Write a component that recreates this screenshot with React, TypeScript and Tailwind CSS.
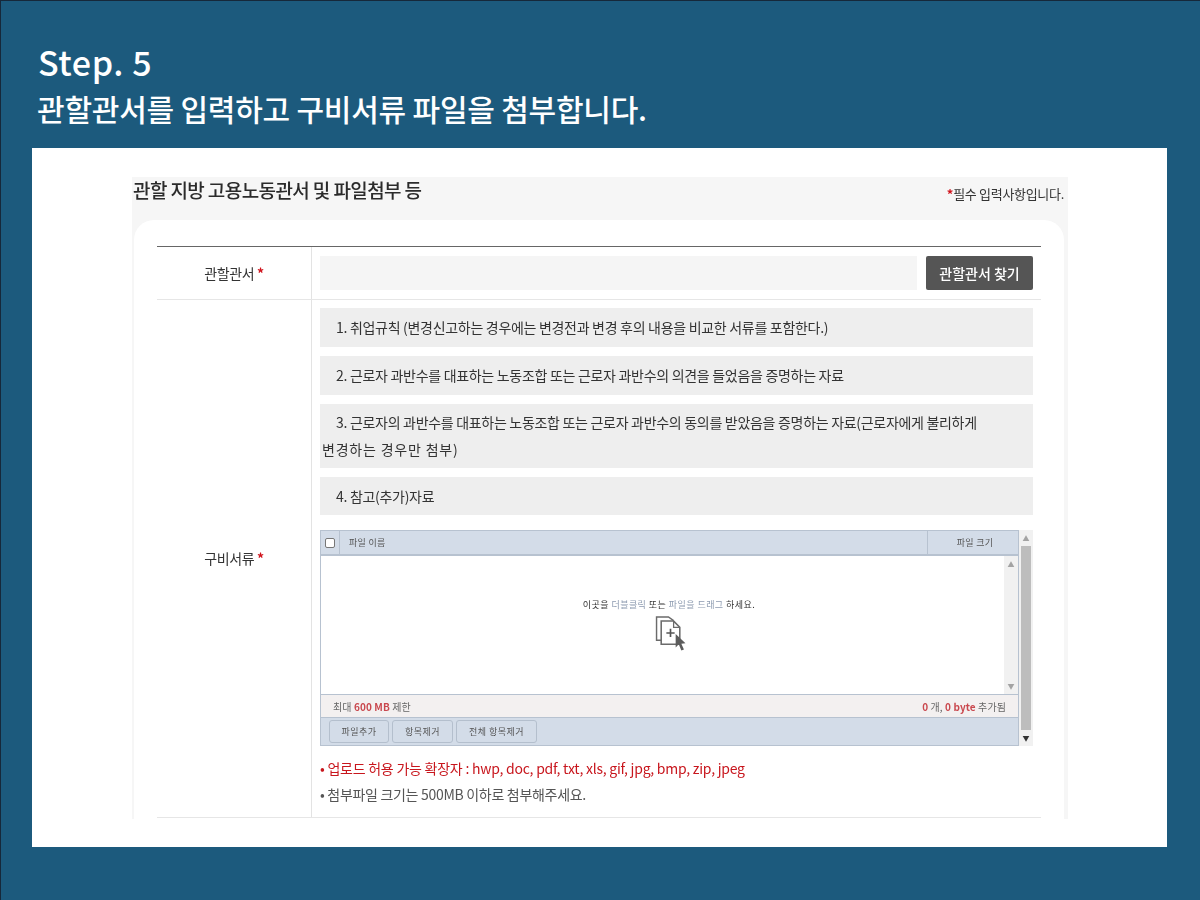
const font = { fontFamily: '"Noto Sans CJK KR", "Noto Sans", sans-serif' }

const docs = [
  '1. 취업규칙 (변경신고하는 경우에는 변경전과 변경 후의 내용을 비교한 서류를 포함한다.)',
  '2. 근로자 과반수를 대표하는 노동조합 또는 근로자 과반수의 의견을 들었음을 증명하는 자료',
]

const FileIcon = () => (
  <svg width="31" height="38" viewBox="0 0 30 36" fill="none" className="mt-[4px] ml-[2px]">
    <path d="M6 24H1.5V1.5H13L18 5" stroke="#6b6b6b" strokeWidth="1.4" />
    <path d="M6 5.5H18L24 11.5V28H6Z" fill="#fff" stroke="#6b6b6b" strokeWidth="1.5" />
    <path d="M18 5.5V11.5H24" stroke="#6b6b6b" strokeWidth="1.2" />
    <path d="M15 13V21M11 17H19" stroke="#555" strokeWidth="1.6" />
    <path d="M20 18L20 31L23 28L25.5 34L28 33L25.5 27.5L29.5 27Z" fill="#5c5c5c" />
  </svg>
)

const Label = ({ children }: { children: string }) => (
  <div className="flex items-center justify-center border-r border-[#e3e3e3] text-[14px] tracking-[-0.4px] text-[#333]">
    {children}
    <span className="ml-[3px] font-bold text-[#d0121b]">*</span>
  </div>
)

const SmallButton = ({ children, w }: { children: string; w: string }) => (
  <button className={`h-[23px] rounded-[3px] border border-[#b4bfcd] text-[9px] tracking-[0.5px] text-[#555] ${w}`}>{children}</button>
)

export default function App() {
  return (
    <div className="flex h-[900px] w-[1200px] flex-col overflow-hidden border-t border-l border-[#16283a] bg-[#1c5a7d]" style={font}>
      <div className="h-[147px] pl-[37px] pt-[39px] text-white">
        <div className="text-[34px] leading-[44px] font-medium tracking-[0.6px]">Step. 5</div>
        <div className="mt-[3px] -ml-[1px] text-[30px] leading-[42px] font-medium tracking-[-0.22px]">관할관서를 입력하고 구비서류 파일을 첨부합니다.</div>
      </div>

      <div className="ml-[31px] h-[699px] w-[1135px] bg-white pl-[100px] pt-[29px]">
        <div className="h-[642px] w-[936px] overflow-hidden bg-[#f6f6f6] blur-[0.35px]">
          <div className="flex h-[43px] items-start justify-between pl-[1px] pr-[4px]">
            <h2 className="-mt-[2px] text-[19px] leading-[30px] font-medium tracking-[-0.6px] text-[#2b2b2b]">관할 지방 고용노동관서 및 파일첨부 등</h2>
            <p className="mt-[7px] text-[13px] leading-[20px] tracking-[-0.3px] text-[#333]">
              <span className="font-bold text-[#d0121b]">*</span>필수 입력사항입니다.
            </p>
          </div>

          <div className="ml-[2px] h-[599px] w-[930px] rounded-t-[20px] bg-white px-[23px] pt-[26px]">
            <div className="border-t border-[#666]">
              <div className="grid h-[53px] grid-cols-[155px_1fr] border-b border-[#e6e6e6]">
                <Label>관할관서</Label>
                <div className="flex items-start gap-[9px] pl-[8px] pr-[8px] pt-[9px]">
                  <div className="h-[34px] flex-1 bg-[#f5f5f5]" />
                  <button className="h-[34px] w-[107px] rounded-[2px] bg-[#555] text-[14px] font-medium text-white">관할관서 찾기</button>
                </div>
              </div>

              <div className="grid h-[518px] grid-cols-[155px_1fr] border-b border-[#e6e6e6]">
                <Label>구비서류</Label>
                <div className="pl-[8px] pr-[8px] pt-[8px] text-[14px] tracking-[-0.3px] text-[#333]">
                  {docs.map((text) => (
                    <div key={text} className="mb-[9px] flex h-[39px] items-center bg-[#eeeeee] pl-[16px]">{text}</div>
                  ))}
                  <div className="mb-[9px] flex h-[64px] items-center bg-[#eeeeee] pl-[2px] leading-[27px]">
                    <p className="indent-[14px]">
                      3. 근로자의 과반수를 대표하는 노동조합 또는 근로자 과반수의 동의를 받았음을 증명하는 자료(근로자에게 불리하게
                      <br />
                      <span className="tracking-[0.8px]">변경하는 경우만 첨부)</span>
                    </p>
                  </div>
                  <div className="flex h-[38px] items-center bg-[#eeeeee] pl-[16px]">4. 참고(추가)자료</div>

                  <div className="mt-[15px] flex h-[216px] tracking-normal">
                    <div className="flex w-[699px] flex-col border border-[#b7c2d0]">
                      <div className="flex h-[25px] items-center border-b-2 border-[#b7c2d0] bg-[#d3dce8] text-[9px] tracking-[0.3px] text-[#555]">
                        <div className="flex h-full w-[19px] items-center justify-center border-r border-[#b7c2d0]">
                          <span className="h-[10px] w-[10px] rounded-[2px] border border-[#777] bg-white" />
                        </div>
                        <div className="flex-1 pl-[9px]">파일 이름</div>
                        <div className="flex h-full w-[91px] items-center justify-center border-l border-[#b7c2d0] pl-[4px]">파일 크기</div>
                      </div>

                      <div className="flex h-[138px]">
                        <div className="flex flex-1 flex-col items-center pl-[13px] pt-[43px]">
                          <p className="text-[9px] leading-[12px] tracking-[0.45px] text-[#333]">
                            이곳을 <span className="text-[#8d9bb0]">더블클릭</span> 또는 <span className="text-[#8d9bb0]">파일을 드래그</span> 하세요.
                          </p>
                          <FileIcon />
                        </div>
                        <div className="flex w-[14px] flex-col items-center justify-between bg-[#f1f1f1] py-[3px] text-[7px] leading-[10px] text-[#a3a3a3]">
                          <span>▲</span>
                          <span>▼</span>
                        </div>
                      </div>

                      <div className="flex h-[23px] items-center justify-between border-t border-[#b7c2d0] bg-[#f3f0f0] pl-[12px] pr-[12px] text-[10px] tracking-[0.1px] text-[#666]">
                        <span>최대 <b className="text-[#c9484e]">600 MB</b> 제한</span>
                        <span><b className="text-[#c9484e]">0</b> 개, <b className="text-[#c9484e]">0 byte</b> 추가됨</span>
                      </div>

                      <div className="flex flex-1 items-center gap-[3px] border-t border-[#b7c2d0] bg-[#d3dce8] pl-[8px]">
                        <SmallButton w="w-[60px]">파일추가</SmallButton>
                        <SmallButton w="w-[61px]">항목제거</SmallButton>
                        <SmallButton w="w-[81px]">전체 항목제거</SmallButton>
                      </div>
                    </div>

                    <div className="flex w-[14px] flex-col items-center bg-[#f1f1f1] text-[7px] leading-[16px]">
                      <span className="text-[#a3a3a3]">▲</span>
                      <div className="w-[10px] flex-1 bg-[#bdbdbd]" />
                      <span className="text-[#333]">▼</span>
                    </div>
                  </div>

                  <div className="mt-[9px] text-[14px] leading-[26px] tracking-[-0.3px]">
                    <p className="tracking-[-0.24px] text-[#c8161d]">• 업로드 허용 가능 확장자 : hwp, doc, pdf, txt, xls, gif, jpg, bmp, zip, jpeg</p>
                    <p className="text-[#555]">• 첨부파일 크기는 500MB 이하로 첨부해주세요.</p>
                  </div>
                </div>
              </div>
            </div>
          </div>
        </div>
      </div>
    </div>
  )
}
